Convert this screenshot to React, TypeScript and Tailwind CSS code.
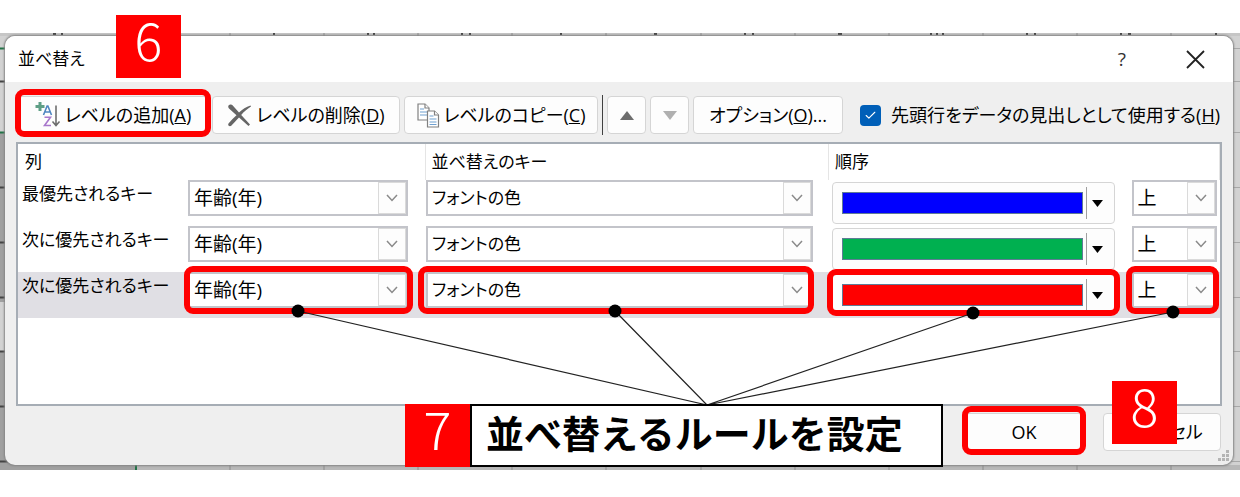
import React from "react";
import { Check } from "lucide-react";

type Level = {
  label: string;
  column: string;
  sortOn: string;
  color: string;
  position: string;
  selected?: boolean;
};

const levels: Level[] = [
  { label: "最優先されるキー", column: "年齢(年)", sortOn: "フォントの色", color: "bg-[#0000ff]", position: "上" },
  { label: "次に優先されるキー", column: "年齢(年)", sortOn: "フォントの色", color: "bg-[#00b050]", position: "上" },
  { label: "次に優先されるキー", column: "年齢(年)", sortOn: "フォントの色", color: "bg-[#ff0000]", position: "上", selected: true },
];

const buttonStyle =
  "relative flex h-[38px] shrink-0 items-center justify-center whitespace-nowrap rounded-[4px] border border-[#d5d5d5] bg-[#fdfdfd]";

const Highlight: React.FC<{ className: string }> = ({ className }) => (
  <span className={`pointer-events-none absolute z-10 rounded-[9px] border-[6px] border-[#ff0000] ${className}`} />
);

const StepBadge: React.FC<{ step: number; className?: string }> = ({ step, className = "" }) => (
  <div
    className={`flex h-[63px] w-[65px] shrink-0 items-center justify-center bg-[#ff0000] pb-4 text-[52px] leading-none font-light text-white ${className}`}
  >
    {step}
  </div>
);

const AddLevelIcon = () => (
  <svg className="shrink-0" width="26" height="26" viewBox="0 0 26 26" fill="none">
    <path d="M5 0v9M0.5 4.5h9" stroke="#5f9f86" strokeWidth="3" />
    <path d="M8.5 13l3.6-9h.8l3.6 9M9.8 10h5.4" stroke="#4f86c0" strokeWidth="1.6" />
    <path d="M9.5 15.2h6l-6 8.3h6.5" stroke="#a877cc" strokeWidth="1.6" />
    <path d="M21 3.5v20M17.5 19.5l3.5 4 3.5-4" stroke="#6d6d6d" strokeWidth="1.6" />
  </svg>
);

const DeleteIcon = () => (
  <svg className="shrink-0" width="25" height="23" viewBox="0 0 25 23">
    <path
      d="M1.5 1.5C3 0 5 .5 6.200 2L12 8.600C15.500 5.200 19 3 23.500 1.500L24 2.500C20 5 17 7.500 14.200 11L23 20.500L21.500 22L12 13.500C9 16.500 6.500 19.500 4 22C2 22.500 .8 21.500 1.300 19.800C4 16.500 6.600 13.800 9.500 11.300L2 4.500C1.200 3.500 1 2.300 1.500 1.500Z"
      fill="#666"
    />
  </svg>
);

const CopyIcon = () => (
  <svg className="shrink-0" width="23" height="25" viewBox="0 0 23 25" fill="#fff" stroke="#808080" strokeWidth="1.2">
    <path d="M1 1h7l4 4v12H1z" />
    <path d="M8 1v4h4" />
    <path d="M3 6h4M3 9h7M3 12h7" stroke="#6fa0d0" />
    <path d="M10.500 8h7l4 4v12h-11z" />
    <path d="M17.500 8v4h4" />
    <path d="M12.500 13h4M12.500 16h7M12.500 19h7M12.500 21.500h7" stroke="#6fa0d0" />
  </svg>
);

const Triangle: React.FC<{ up?: boolean; className: string }> = ({ up, className }) => (
  <svg width="14" height="9" viewBox="0 0 14 9" className={className}>
    <path d={up ? "M0 9L7 0l7 9z" : "M0 0h14L7 9z"} fill="currentColor" />
  </svg>
);

const SelectBox: React.FC<{ label: string; value: string; textSize: string; highlight?: string }> = ({
  label,
  value,
  textSize,
  highlight,
}) => (
  <div className="relative h-[36px]">
    <select
      aria-label={label}
      defaultValue={value}
      className={`h-full w-full appearance-none border-2 border-[#c3c4ca] bg-white pl-1 text-black outline-none ${textSize}`}
    >
      <option value={value}>{value}</option>
    </select>
    <span className="pointer-events-none absolute top-[2px] right-[2px] bottom-[2px] flex w-[28px] items-center justify-center border border-[#dadada] bg-[#fdfdfd]">
      <svg width="12" height="8" viewBox="0 0 12 8" fill="none" stroke="#8a8a8a" strokeWidth="1.5">
        <path d="M1 1l5 5.500L11 1" />
      </svg>
    </span>
    {highlight && <Highlight className={highlight} />}
  </div>
);

const ColorPicker: React.FC<{ color: string; selected?: boolean }> = ({ color, selected }) => (
  <button
    aria-label="色"
    className="relative flex h-[42px] w-full items-center rounded-[4px] border border-[#d5d5d5] bg-[#fdfdfd] pr-[10px] pl-[9px]"
  >
    <span className={`h-[22px] flex-1 border border-[#5f7b96] ${color}`} />
    <span className="ml-[3px] h-[32px] w-px bg-[#a0a0a0]" />
    <Triangle className="ml-1 h-[7px] w-[13px] text-black" />
    {selected && <Highlight className="-top-[6px] -right-[6px] -bottom-[1px] -left-[6px]" />}
  </button>
);

const Toolbar = () => (
  <div className="flex items-center gap-1 pt-[13px] pr-[13px] pb-[7px] pl-[13px]">
    <button className={`${buttonStyle} w-[190px] gap-1`}>
      <AddLevelIcon />
      <span>
        レベルの追加(<u>A</u>)
      </span>
      <Highlight className="-top-[8px] -right-[4px] -bottom-[4px] -left-[4px]" />
    </button>
    <button className={`${buttonStyle} w-[188px] gap-1`}>
      <DeleteIcon />
      <span>
        レベルの削除(<u>D</u>)
      </span>
    </button>
    <button className={`${buttonStyle} w-[194px] gap-1`}>
      <CopyIcon />
      <span>
        レベルのコピー(<u>C</u>)
      </span>
    </button>
    <span className="h-[40px] w-px bg-[#404040]" />
    <button aria-label="上へ移動" className={`${buttonStyle} w-[39px]`}>
      <Triangle up className="text-[#6d6d6d]" />
    </button>
    <button aria-label="下へ移動" className={`${buttonStyle} w-[39px]`}>
      <Triangle className="text-[#b0b0b0]" />
    </button>
    <button className={`${buttonStyle} w-[150px]`}>
      <span>
        オプション(<u>O</u>)...
      </span>
    </button>
    <label className="ml-auto flex items-center gap-[10px] whitespace-nowrap">
      <span className="relative flex">
        <input type="checkbox" defaultChecked className="size-[21px] appearance-none rounded-[4px] bg-[#005fb8]" />
        <Check className="pointer-events-none absolute inset-1 size-[13px] text-white" strokeWidth={2} />
      </span>
      <span>
        先頭行をデータの見出しとして使用する(<u>H</u>)
      </span>
    </label>
  </div>
);

const LevelTable = () => (
  <div className="mx-[11px] h-[264px] border-2 border-[#a6adb5] bg-white">
    <table className="w-full table-fixed border-collapse text-left">
      <colgroup>
        <col className="w-[170px]" />
        <col className="w-[237px]" />
        <col />
        <col className="w-[303px]" />
        <col className="w-[88px]" />
      </colgroup>
      <thead>
        <tr className="h-[36px] text-[17px]">
          <th colSpan={2} className="border-r border-[#e5e5e5] pl-[7px] font-normal">列</th>
          <th className="border-r border-[#e5e5e5] pl-[6px] font-normal">並べ替えのキー</th>
          <th colSpan={2} className="border-r border-[#e5e5e5] pl-[6px] font-normal">順序</th>
        </tr>
      </thead>
      <tbody>
        {levels.map((level, index) => (
          <tr key={index} className={`h-[46px] align-top ${level.selected ? "bg-[#e0dfe4]" : ""}`}>
            <td className="pl-1 text-[17px] whitespace-nowrap">{level.label}</td>
            <td className="pr-[17px]">
              <SelectBox
                label="列"
                value={level.column}
                textSize="text-[19px]"
                highlight={level.selected ? "-top-[6px] -right-[5px] -bottom-[6px] -left-[4px]" : undefined}
              />
            </td>
            <td className="pr-[16px] pl-px">
              <SelectBox
                label="並べ替えのキー"
                value={level.sortOn}
                textSize="text-[17px]"
                highlight={level.selected ? "-top-[6px] -right-[1px] -bottom-[6px] -left-[8px]" : undefined}
              />
            </td>
            <td className="pt-[2px] pr-[17px] pl-[3px]">
              <ColorPicker color={level.color} selected={level.selected} />
            </td>
            <td className="pr-[3px]">
              <SelectBox
                label="順序"
                value={level.position}
                textSize="text-[19px]"
                highlight={level.selected ? "-top-[6px] -right-[2px] -bottom-[6px] -left-[6px]" : undefined}
              />
            </td>
          </tr>
        ))}
      </tbody>
    </table>
  </div>
);

const columnLines = [230, 324, 418, 512, 606, 701, 795, 889, 983, 1077, 1171];
const rowLines = [48, 81, 132, 187, 242, 297, 351, 406, 461];

// Worksheet that shows round the edges of the dialog
const Worksheet = () => (
  <svg className="absolute inset-0 h-full w-full" aria-hidden="true">
    <rect width="100%" height="100%" fill="#d2d2d2" />
    <rect y="99" width="136" height="170" fill="#a0a0a0" />
    <rect y="318" width="136" height="119" fill="#a0a0a0" />
    <rect x="136" y="432" width="100%" height="5" fill="#b8b8b8" />
    <rect width="100%" height="3" fill="#c6c6c6" />
    {columnLines.map((x) => (
      <path key={x} d={`M${x} 0v437`} stroke="#8c8c8c" />
    ))}
    {rowLines.map((y) => (
      <React.Fragment key={y}>
        <path d={`M0 ${y - 33}.5h10`} stroke={y === 48 || y === 132 ? "#217346" : "#444"} strokeWidth="2" />
        <path d={`M1225 ${y - 33}.5h2000`} stroke="#a8a8a8" />
      </React.Fragment>
    ))}
    <path d="M136 430v7" stroke="#217346" strokeWidth="2" />
    <path
      d="M53 1h3M61 1h2M273 1h2M367 1h2M373 1h2M461 1h2M469 1h2M560 1h2M654 1h3M744 1h2M752 1h2M838 1h4M930 1h2M936 1h2M942 1h2M1026 1h2M1034 1h2M1120 1h2M1128 1h3M1215 1h2"
      stroke="#444"
      strokeWidth="2"
    />
  </svg>
);

export default function App() {
  return (
    <main className="relative min-h-screen bg-white pt-[33px] font-['Noto_Sans_CJK_JP',sans-serif] text-[18px] leading-7 text-black">
      <div className="relative pt-[3px] pr-[7px] pb-[5px] pl-[5px]">
        <Worksheet />
        <section
          role="dialog"
          aria-label="並べ替え"
          className="relative overflow-hidden rounded-[10px] bg-[#efefef] font-['Open_Sans','Noto_Sans_CJK_JP',sans-serif] shadow-[0_0_2px_1px_#858585] [font-feature-settings:'palt']"
        >
          <header className="flex h-[46px] items-center bg-white pr-[28px] pl-[13px]">
            <h1 className="text-[17px]">並べ替え</h1>
            <button aria-label="ヘルプ" className="mr-[60px] ml-auto text-[19px] text-[#333]">?</button>
            <button aria-label="閉じる">
              <svg width="19" height="19" viewBox="0 0 19 19" stroke="#222" strokeWidth="1.8">
                <path d="M1 1l17 17M18 1L1 18" />
              </svg>
            </button>
          </header>
          <Toolbar />
          <LevelTable />
          <footer className="flex justify-end gap-5 pt-[7px] pr-3 pb-[14px]">
            <button className={`${buttonStyle} w-[118px]`}>
              OK
              <Highlight className="-top-[8px] -right-[4px] -bottom-[5px] -left-[4px]" />
            </button>
            <button className={`${buttonStyle} w-[118px]`}>キャンセル</button>
          </footer>
          <svg className="absolute right-[3px] bottom-[3px]" width="12" height="12" fill="#b5b5b5">
            <path d="M8 0h3v3H8zM4 4h3v3H4zM8 4h3v3H8zM0 8h3v3H0zM4 8h3v3H4zM8 8h3v3H8z" />
          </svg>
        </section>
      </div>

      <svg className="pointer-events-none absolute top-0 left-0 z-20" width="1240" height="497" aria-hidden="true">
        <path d="M298 311L707 405L615 311M973 313L707 405L1173 312" fill="none" stroke="#222" strokeWidth="1.2" />
        <circle cx="298" cy="311" r="6.5" />
        <circle cx="615" cy="311" r="6.5" />
        <circle cx="973" cy="313" r="6.5" />
        <circle cx="1173" cy="312" r="6.5" />
      </svg>

      <StepBadge step={6} className="absolute top-[15px] left-[116px] z-20" />
      <div className="absolute top-[404px] left-[405px] z-20 flex">
        <StepBadge step={7} />
        <p className="flex h-[63px] w-[473px] items-center border-2 border-black bg-white pb-2 pl-[14px] text-[38px] leading-none font-bold whitespace-nowrap">
          並べ替えるルールを設定
        </p>
      </div>
      <StepBadge step={8} className="absolute top-[381px] left-[1112px] z-20" />
    </main>
  );
}
